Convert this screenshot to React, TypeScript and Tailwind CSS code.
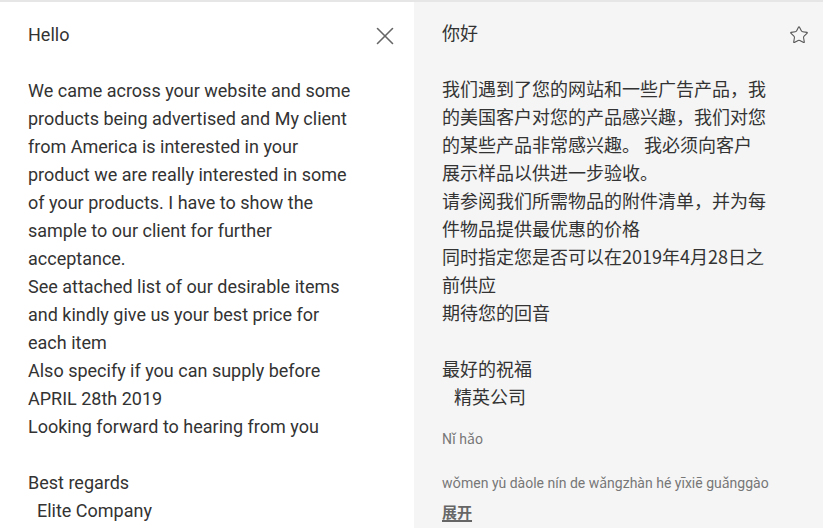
import { X, Star } from "lucide-react";

const sourceText = `Hello

We came across your website and some products being advertised and My client from America is interested in your product we are really interested in some of your products. I have to show the sample to our client for further acceptance.
See attached list of our desirable items and kindly give us your best price for each item
Also specify if you can supply before APRIL 28th 2019
Looking forward to hearing from you

Best regards
  Elite Company`;

const translatedText = `你好

我们遇到了您的网站和一些广告产品，我的美国客户对您的产品感兴趣，我们对您的某些产品非常感兴趣。 我必须向客户展示样品以供进一步验收。
请参阅我们所需物品的附件清单，并为每件物品提供最优惠的价格
同时指定您是否可以在2019年4月28日之前供应
期待您的回音

最好的祝福
   精英公司`;

export default function App() {
  return (
    <div className="w-[823px] h-[528px] overflow-hidden border-t-2 border-[#e6e6e6] flex font-['Roboto','Noto_Sans_CJK_SC',sans-serif]">
      {/* Source */}
      <div className="w-[414px] bg-white flex pl-[28px] pr-[14px] pt-[19px]">
        <div className="w-[328px] whitespace-pre-wrap text-[18px] leading-[28px] text-[#333]">
          {sourceText}
        </div>
        <button className="ml-auto h-[30px] text-[#666]">
          <X size={30} strokeWidth={1.3} />
        </button>
      </div>

      {/* Translation */}
      <div className="flex-1 bg-[#f5f5f5] flex pl-[28px] pr-[14px] pt-[16px]">
        <div className="w-[326px]">
          <div className="whitespace-pre-wrap text-[18px] leading-[28px] text-[#333] font-['Noto_Sans_CJK_SC',sans-serif]">
            {translatedText}
          </div>
          <div className="mt-[19px] text-[14px] leading-[20px] text-[#777]">Nǐ hǎo</div>
          <div className="mt-[24px] text-[14px] leading-[20px] text-[#777] whitespace-nowrap">
            wǒmen yù dàole nín de wǎngzhàn hé yīxiē guǎnggào
          </div>
          <a className="block mt-[8px] text-[15px] leading-[22px] font-semibold text-[#666] underline decoration-2 underline-offset-2 font-['Noto_Sans_CJK_SC',sans-serif]">
            展开
          </a>
        </div>
        <button className="ml-auto mt-[7px] h-[20px] text-[#555]">
          <Star size={20} strokeWidth={1.3} />
        </button>
      </div>
    </div>
  );
}
